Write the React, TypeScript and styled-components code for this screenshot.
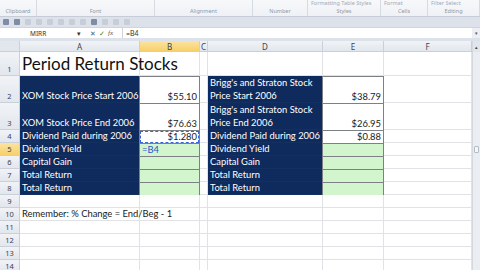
import React from 'react'
import styled, { createGlobalStyle, css } from 'styled-components'

const GlobalStyle = createGlobalStyle`
  html, body { margin: 0; padding: 0; background: #ffffff; }
  body { width: 480px; height: 270px; overflow: hidden; font-family: "Noto Sans", "Liberation Sans", sans-serif; }
  * { box-sizing: border-box; }
`

const COLS = [20, 120, 60, 8, 115, 61, 88]
const ROWS = [
  { n: 1, h: 24 },
  { n: 2, h: 27 },
  { n: 3, h: 27 },
  { n: 4, h: 13 },
  { n: 5, h: 13 },
  { n: 6, h: 13 },
  { n: 7, h: 13 },
  { n: 8, h: 13 },
  { n: 9, h: 13 },
  { n: 10, h: 13 },
  { n: 11, h: 13 },
  { n: 12, h: 13 },
  { n: 13, h: 13 },
  { n: 14, h: 13 },
]

type Kind = 'plain' | 'dark' | 'white' | 'green' | 'title'
interface CellDef {
  text?: string
  kind?: Kind
  right?: boolean
  wrap?: boolean
  active?: boolean
  copy?: boolean
}

const labels = [
  'Dividend Paid during 2006',
  'Dividend Yield',
  'Capital Gain',
  'Total Return',
  'Total Return',
]

const rowCells = (r: number): CellDef[] => {
  const empty: CellDef[] = [{}, {}, {}, {}, {}, {}]
  if (r === 1) return [{ text: 'Period Return Stocks', kind: 'title' }, {}, {}, {}, {}, {}]
  if (r === 2)
    return [
      { text: 'XOM Stock Price Start 2006', kind: 'dark' },
      { text: '$55.10', kind: 'white', right: true },
      {},
      { text: "Brigg's and Straton Stock Price Start 2006", kind: 'dark', wrap: true },
      { text: '$38.79', kind: 'white', right: true },
      {},
    ]
  if (r === 3)
    return [
      { text: 'XOM Stock Price End 2006', kind: 'dark' },
      { text: '$76.63', kind: 'white', right: true },
      {},
      { text: "Brigg's and Straton Stock Price End 2006", kind: 'dark', wrap: true },
      { text: '$26.95', kind: 'white', right: true },
      {},
    ]
  if (r === 4)
    return [
      { text: labels[0], kind: 'dark' },
      { text: '$1.280', kind: 'white', right: true, copy: true },
      {},
      { text: labels[0], kind: 'dark' },
      { text: '$0.88', kind: 'white', right: true },
      {},
    ]
  if (r >= 5 && r <= 8)
    return [
      { text: labels[r - 4], kind: 'dark' },
      r === 5 ? { text: '=B4', kind: 'green', active: true } : { kind: 'green' },
      {},
      { text: labels[r - 4], kind: 'dark' },
      { kind: 'green' },
      {},
    ]
  if (r === 10) return [{ text: 'Remember: % Change = End/Beg - 1' }, {}, {}, {}, {}, {}]
  return empty
}

const Window = styled.div`
  width: 480px;
  height: 270px;
  display: flex;
  flex-direction: column;
  overflow: hidden;
  background: #fff;
`

const Ribbon = styled.div`
  height: 17px;
  background: linear-gradient(#f7f8fa, #eef1f5);
  border-bottom: 1px solid #c6cdd8;
  display: flex;
  font-size: 5.5px;
  line-height: 7px;
  color: #8a94a3;
`

const RibbonGroup = styled.div<{ $w: number }>`
  width: ${(p) => p.$w}px;
  border-right: 1px solid #d6dbe3;
  display: flex;
  flex-direction: column;
  justify-content: space-between;
  padding: 0 3px 1px;
  white-space: nowrap;
`

const RibbonTop = styled.div`
  display: flex;
  gap: 5px;
  color: #a3abb7;
`

const GroupLabel = styled.div`
  text-align: center;
  color: #8f98a6;
`

const Qat = styled.div`
  height: 10px;
  background: #dde2ea;
  display: flex;
  align-items: center;
  gap: 5px;
  padding-left: 3px;
`

const QatIcon = styled.span<{ $faint?: boolean }>`
  display: block;
  width: 6px;
  height: 6px;
  border-radius: 1px;
  background: ${(p) => (p.$faint ? '#c8ced8' : '#7d8da6')};
`

const FormulaBar = styled.div`
  height: 11px;
  background: #fff;
  display: flex;
  align-items: center;
  font-size: 6.5px;
  color: #333;
  border-top: 1px solid #cfd5de;
`

const NameBox = styled.div`
  width: 84px;
  display: flex;
  align-items: center;
  justify-content: space-between;
  padding: 0 3px 0 30px;
  height: 100%;
`

const FxTools = styled.div`
  width: 38px;
  display: flex;
  align-items: center;
  gap: 3px;
  color: #555;
  font-size: 7px;
  padding-left: 6px;
`

const Formula = styled.div`
  flex: 1;
  padding-left: 3px;
  font-family: "Lato", sans-serif;
  font-size: 7px;
  border-left: 1px solid #d0d5dd;
  height: 100%;
  display: flex;
  align-items: center;
`

const BarArrow = styled.div`
  width: 8px;
  height: 100%;
  background: #eceff3;
  font-size: 5px;
  display: flex;
  align-items: center;
  justify-content: center;
  color: #555;
`

const Spacer = styled.div`
  height: 3px;
  background: #dde2ea;
`

const SheetArea = styled.div`
  flex: 1;
  display: flex;
  overflow: hidden;
`

const Grid = styled.div`
  display: grid;
  grid-template-columns: ${COLS.map((c) => c + 'px').join(' ')};
  grid-template-rows: 11px ${ROWS.map((r) => r.h + 'px').join(' ')};
  font-family: "Lato", "Liberation Sans", sans-serif;
  align-content: start;
`

const Header = styled.div<{ $sel?: boolean; $corner?: boolean }>`
  background: ${(p) => (p.$sel ? 'linear-gradient(#fbe3a0, #f6d06a)' : 'linear-gradient(#f1f3f6, #e2e7ee)')};
  border-right: 1px solid #c9d0da;
  border-bottom: 1px solid #c9d0da;
  color: #3b4350;
  font-family: "Noto Sans", sans-serif;
  font-size: 8px;
  display: flex;
  align-items: center;
  justify-content: center;
  ${(p) =>
    p.$corner &&
    css`
      background: #e2e7ee;
    `}
`

const RowHead = styled(Header)`
  font-size: 7.5px;
  align-items: flex-end;
  padding-bottom: 1px;
  line-height: 10px;
`

const fills: Record<Kind, string> = {
  plain: '#ffffff',
  title: '#ffffff',
  dark: '#0f2a5c',
  white: '#ffffff',
  green: '#d3f5cd',
}

const Cell = styled.div<{ $kind: Kind; $right?: boolean; $wrap?: boolean; $copy?: boolean; $active?: boolean }>`
  position: relative;
  background: ${(p) => fills[p.$kind]};
  border-right: 1px solid ${(p) => (p.$kind === 'dark' ? '#0f2a5c' : '#e0e2e5')};
  border-bottom: 1px solid ${(p) => (p.$kind === 'dark' ? '#14305f' : '#e0e2e5')};
  color: ${(p) => (p.$kind === 'dark' ? '#ffffff' : '#1a1a1a')};
  font-size: 9.4px;
  line-height: 13px;
  padding: 0 2px;
  display: flex;
  align-items: flex-end;
  justify-content: ${(p) => (p.$right ? 'flex-end' : 'flex-start')};
  white-space: ${(p) => (p.$wrap ? 'normal' : 'nowrap')};
  ${(p) =>
    (p.$kind === 'white' || p.$kind === 'green') &&
    css`
      border: 1px solid #7d8187;
      margin: 0 0 -1px -1px;
    `}
  ${(p) =>
    p.$kind === 'title' &&
    css`
      font-size: 17px;
      line-height: 22px;
      color: #111;
      z-index: 1;
    `}
  ${(p) =>
    p.$copy &&
    css`
      outline: 1px dashed #3a63d6;
      outline-offset: -2px;
    `}
  ${(p) =>
    p.$active &&
    css`
      color: #2a52cc;
      justify-content: flex-start;
    `}
`

const Overflow = styled.span`
  position: relative;
  z-index: 2;
`

const Scrollbar = styled.div`
  width: 8px;
  background: #eaedf1;
  border-left: 1px solid #d4d9e0;
  display: flex;
  flex-direction: column;
  align-items: center;
`

const ScrollArrow = styled.div`
  height: 11px;
  width: 100%;
  font-size: 5px;
  color: #444;
  display: flex;
  align-items: center;
  justify-content: center;
  background: #e1e6ec;
`

const ScrollThumb = styled.div`
  margin-top: 94px;
  width: 5px;
  height: 7px;
  border: 1px solid #b3bbc6;
  border-radius: 1px;
  background: #f4f6f8;
`

const ribbonGroups = [
  { w: 37, label: 'Clipboard', top: '' },
  { w: 118, label: 'Font', top: '' },
  { w: 98, label: 'Alignment', top: '' },
  { w: 55, label: 'Number', top: '' },
  { w: 73, label: 'Styles', top: 'Formatting Table Styles' },
  { w: 47, label: 'Cells', top: 'Format' },
  { w: 52, label: 'Editing', top: 'Filter Select' },
]

const colLetters = ['A', 'B', 'C', 'D', 'E', 'F']

export default function App() {
  return (
    <Window>
      <GlobalStyle />
      <Ribbon>
        {ribbonGroups.map((g) => (
          <RibbonGroup key={g.label} $w={g.w}>
            <RibbonTop>{g.top}</RibbonTop>
            <GroupLabel>{g.label}</GroupLabel>
          </RibbonGroup>
        ))}
      </Ribbon>
      <Qat>
        <QatIcon />
        <QatIcon />
        <QatIcon $faint />
        <QatIcon $faint />
        <QatIcon $faint />
        <QatIcon $faint />
        <QatIcon $faint />
        <QatIcon $faint />
        <QatIcon />
        <QatIcon $faint />
        <QatIcon $faint />
        <QatIcon $faint />
      </Qat>
      <FormulaBar>
        <NameBox>
          <span>MIRR</span>
          <span>▾</span>
        </NameBox>
        <FxTools>
          <span>✕</span>
          <span style={{ color: '#2f8a2f' }}>✓</span>
          <i style={{ fontFamily: 'Liberation Serif, serif' }}>fx</i>
        </FxTools>
        <Formula>=B4</Formula>
        <BarArrow>▾</BarArrow>
      </FormulaBar>
      <Spacer />
      <SheetArea>
        <Grid>
          <Header $corner />
          {colLetters.map((l) => (
            <Header key={l} $sel={l === 'B'}>
              {l}
            </Header>
          ))}
          {ROWS.map((r) => (
            <React.Fragment key={r.n}>
              <RowHead $sel={r.n === 5}>{r.n}</RowHead>
              {rowCells(r.n).map((c, i) => (
                <Cell
                  key={i}
                  $kind={c.kind ?? 'plain'}
                  $right={c.right}
                  $wrap={c.wrap}
                  $copy={c.copy}
                  $active={c.active}
                >
                  {c.text && <Overflow>{c.text}</Overflow>}
                </Cell>
              ))}
            </React.Fragment>
          ))}
        </Grid>
        <Scrollbar>
          <ScrollArrow>▴</ScrollArrow>
          <ScrollThumb />
        </Scrollbar>
      </SheetArea>
    </Window>
  )
}
